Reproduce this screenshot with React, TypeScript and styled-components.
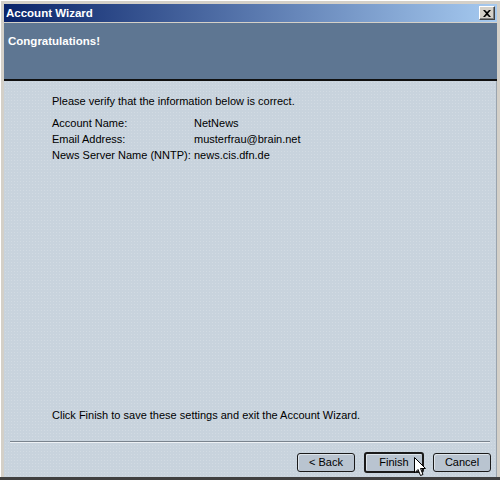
import React from 'react'
import styled, { createGlobalStyle } from 'styled-components'

const GlobalStyle = createGlobalStyle`
  html, body {
    margin: 0;
    padding: 0;
    background: #d4d0c8;
  }
  body {
    font-family: 'Liberation Sans', Arial, sans-serif;
    font-size: 11px;
  }
`

interface ButtonProps {
  primary?: boolean;
}

const App: React.FC = () => {
  const rows = [
    ['Account Name:', 'NetNews'],
    ['Email Address:', 'musterfrau@brain.net'],
    ['News Server Name (NNTP):', 'news.cis.dfn.de'],
  ]

  return (
    <>
      <GlobalStyle />
      <Window>
        <TitleBar>
          <Title>Account Wizard</Title>
          <CloseButton>
            <svg width="8" height="7" viewBox="0 0 8 7">
              <path d="M0 0h2l2 2 2-2h2L5 3.5 8 7H6L4 5 2 7H0l3-3.5z" fill="#000" />
            </svg>
          </CloseButton>
        </TitleBar>
        <Header>
          <HeaderText>Congratulations!</HeaderText>
        </Header>
        <Body>
          <Content>
            <Intro>Please verify that the information below is correct.</Intro>
            <InfoGrid>
              {rows.map(([label, value]) => (
                <React.Fragment key={label}>
                  <span>{label}</span>
                  <span>{value}</span>
                </React.Fragment>
              ))}
            </InfoGrid>
            <Spacer />
            <Outro>Click Finish to save these settings and exit the Account Wizard.</Outro>
          </Content>
          <Separator />
          <ButtonRow>
            <Button>&lt; Back</Button>
            <Button primary>
              Finish
              <Cursor width="12" height="20" viewBox="0 0 12 20">
                <path
                  d="M0.5 0.5v15.5l3.5-3.5 2.5 6 2.5-1-2.5-6h5z"
                  fill="#fff"
                  stroke="#000"
                  strokeWidth="1"
                  strokeLinejoin="miter"
                />
              </Cursor>
            </Button>
            <Button>Cancel</Button>
          </ButtonRow>
        </Body>
      </Window>
    </>
  )
}
export default App

const Window = styled.div`
  width: 500px;
  height: 480px;
  box-sizing: border-box;
  display: flex;
  flex-direction: column;
  padding: 4px 3px 0 4px;
  background: #d4d0c8;
  border-bottom: 3px solid #404040;
  box-shadow: inset 1px 1px 0 #ffffff;
`

const TitleBar = styled.div`
  height: 18px;
  flex-shrink: 0;
  display: flex;
  align-items: center;
  justify-content: space-between;
  padding: 0 2px 0 2px;
  background: linear-gradient(to right, #0a246a, #a6caf0);
`

const Title = styled.div`
  color: #ffffff;
  font-weight: bold;
  font-size: 11.5px;
`

const CloseButton = styled.div`
  width: 16px;
  height: 14px;
  box-sizing: border-box;
  display: flex;
  align-items: center;
  justify-content: center;
  background: #d4d0c8;
  border: 1px solid;
  border-color: #ffffff #404040 #404040 #ffffff;
  box-shadow: inset -1px -1px 0 #808080;
`

const Header = styled.div`
  margin-top: 1px;
  height: 58px;
  flex-shrink: 0;
  box-sizing: border-box;
  background: #5e7692;
  border-bottom: 2px solid #101010;
  padding: 12px 4px 0;
`

const HeaderText = styled.div`
  color: #ffffff;
  font-weight: bold;
  font-size: 11.5px;
`

const Body = styled.div`
  flex: 1;
  display: flex;
  flex-direction: column;
  background-color: #c8d3dd;
  background-image: radial-gradient(rgba(255, 255, 255, 0.18) 0.6px, transparent 0.8px);
  background-size: 3px 3px;
  border-right: 1px solid #9aa4ae;
  color: #000000;
  line-height: 16px;
`

const Content = styled.div`
  flex: 1;
  display: flex;
  flex-direction: column;
  padding: 12px 0 18px 48px;
`

const Intro = styled.div``

const InfoGrid = styled.div`
  margin-top: 6px;
  display: grid;
  grid-template-columns: 142px auto;
`

const Spacer = styled.div`
  flex: 1;
`

const Outro = styled.div``

const Separator = styled.div`
  margin: 0 6px;
  height: 1px;
  background: #7a848e;
  border-bottom: 1px solid #eef2f6;
`

const ButtonRow = styled.div`
  height: 34px;
  box-sizing: border-box;
  display: flex;
  align-items: center;
  justify-content: flex-end;
  gap: 9px;
  padding: 4px 5px 0 0;
`

const Button = styled.div<ButtonProps>`
  position: relative;
  width: ${(p) => (p.primary ? '60px' : '58px')};
  height: ${(p) => (p.primary ? '21px' : '19px')};
  box-sizing: border-box;
  display: flex;
  align-items: center;
  justify-content: center;
  border: ${(p) => (p.primary ? '2px' : '1px')} solid #1a1a1a;
  border-radius: 3px;
  background: #b9c4d0;
  box-shadow: inset 1px 1px 0 #dde4ea;
  font-size: 11px;
  color: #000000;
`

const Cursor = styled.svg`
  position: absolute;
  left: 48px;
  top: 3px;
`
